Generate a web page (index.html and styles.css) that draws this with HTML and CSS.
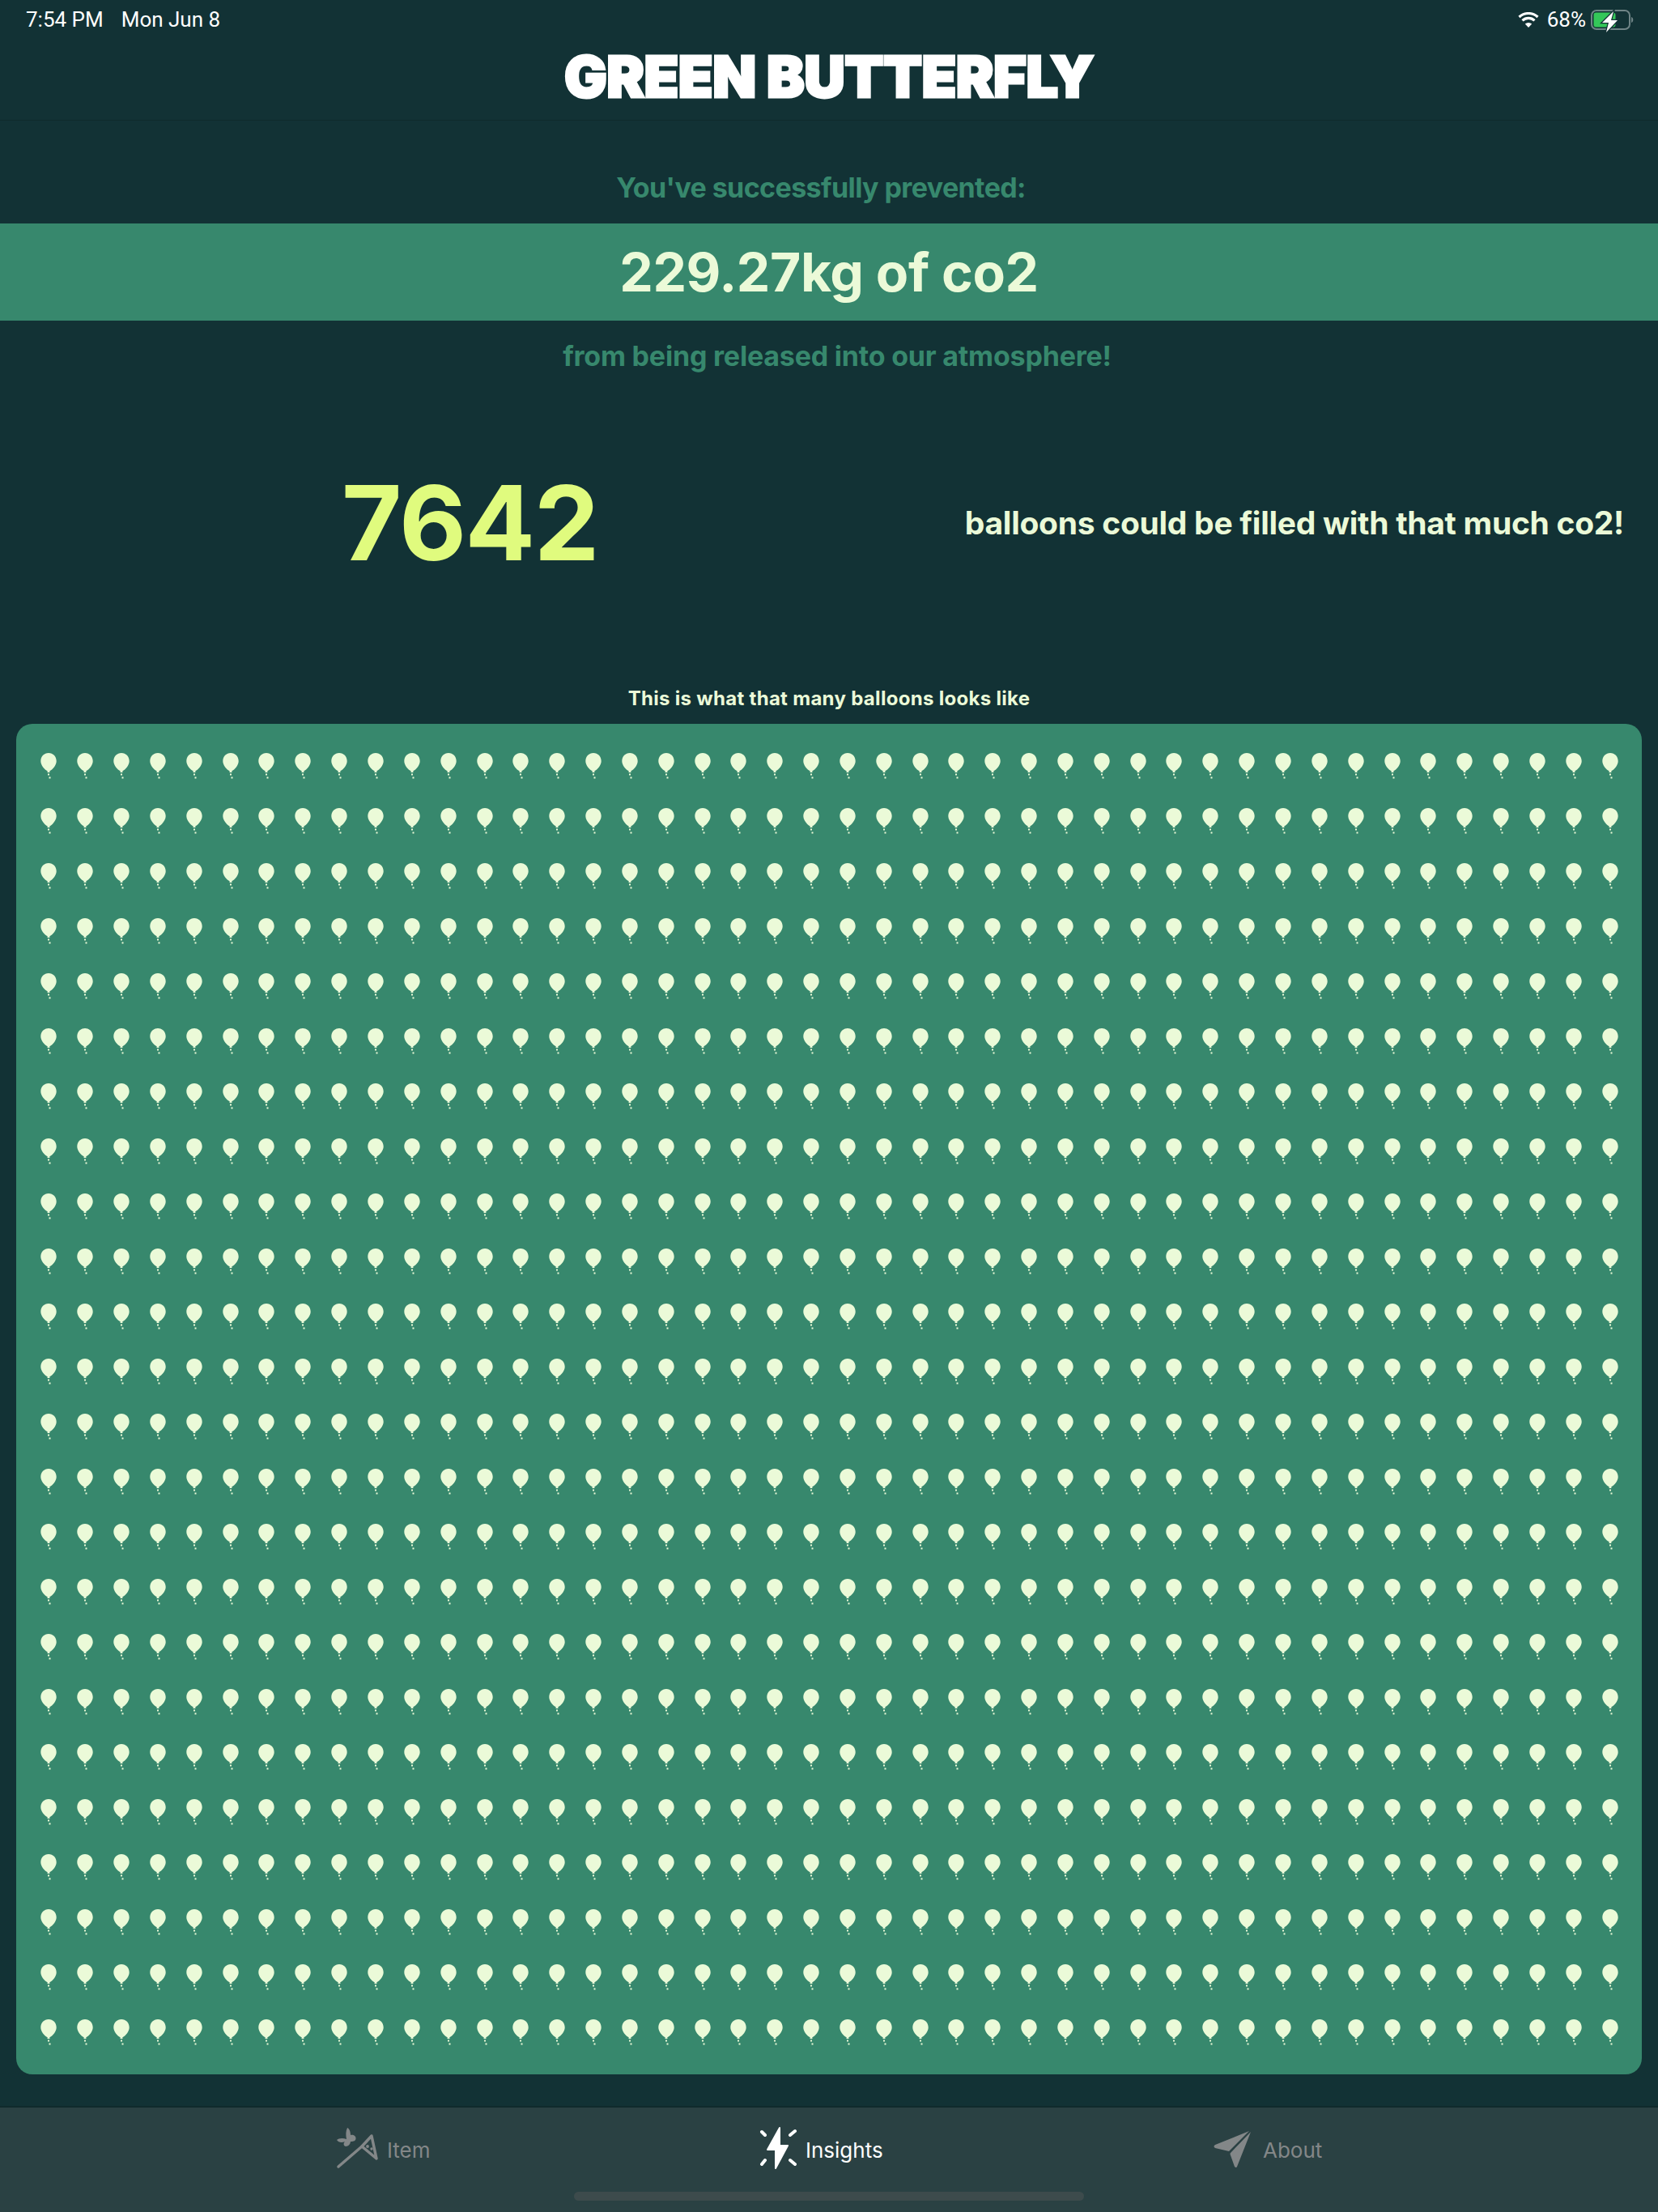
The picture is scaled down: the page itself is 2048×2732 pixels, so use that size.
FILE: index.html
```html
<!DOCTYPE html>
<html lang="en">
<head>
    <meta charset="UTF-8">
    <meta name="viewport" content="width=device-width, initial-scale=1.0">
    <title>Green Butterfly</title>
    <link rel="stylesheet" href="styles.css">
</head>
<body>
    <svg class="defs" width="0" height="0">
        <symbol id="balloon" viewBox="0 0 20 32">
            <path d="M10 0C4.5 0 .3 4.300 .3 10C.3 15 5 20.500 8.800 22.500L8.400 24h3.200L11.200 22.500C15 20.500 19.700 15 19.700 10C19.700 4.300 15.500 0 10 0Z"/>
            <rect x="9" y="25.500" width="2" height="2"/>
            <rect x="10.500" y="29.500" width="2" height="2"/>
        </symbol>
    </svg>

    <div class="status-bar">
        <div class="status-left"><span>7:54 PM</span><span>Mon Jun 8</span></div>
        <div class="status-right">
            <svg class="wifi" viewBox="0 0 26 19" width="26" height="19">
                <path d="M13 19L8.800 14.600A6.300 6.300 0 0 1 17.200 14.600Z" fill="#fff"/>
                <path d="M5.500 10.300A11 11 0 0 1 20.500 10.300M1.500 6A17 17 0 0 1 24.500 6" fill="none" stroke="#fff" stroke-width="3.200"/>
            </svg>
            <span>68%</span>
            <svg class="battery" viewBox="0 0 53 29" width="53" height="29">
                <rect x="1" y="1" width="47" height="23" rx="6" fill="none" stroke="#6f8486" stroke-width="2"/>
                <rect x="3.500" y="3.500" width="27" height="18" rx="3" fill="#34c759"/>
                <path d="M50 9c3 .5 3 6.500 0 7Z" fill="#6f8486"/>
                <path d="M28 2L14 16h8l-3 12 14-15h-8Z" fill="#fff" stroke="#123235" stroke-width="2.500" paint-order="stroke"/>
            </svg>
        </div>
    </div>

    <header class="title-bar">
        <h1>GREEN BUTTERFLY</h1>
    </header>

    <main>
        <p class="prevented first">You've successfully prevented:</p>
        <div class="amount">229.27kg of co2</div>
        <p class="prevented second">from being released into our atmosphere!</p>

        <div class="count-row">
            <div class="count">7642</div>
            <div class="count-text">balloons could be filled with that much co2!</div>
        </div>

        <p class="grid-caption">This is what that many balloons looks like</p>
        <div class="balloon-panel" id="balloonPanel"></div>
    </main>

    <nav class="tab-bar">
        <div class="tabs">
            <div class="tab tab-item">
                <svg viewBox="10 5 54 60" width="54" height="60" fill="#838788">
                    <path d="M24 8C27 9 28 14 28 17C31 16 35 18 34.500 21.500C34 25 30 25 28 25C28 28 25 31 22 31C19 30 19 27 21 25C17 27 13 26 11 23C13 21 18 20 23 22C22 17 22 12 24 8Z"/>
                    <path d="M13 56L42 31" fill="none" stroke="#838788" stroke-width="3.500" stroke-linecap="round"/>
                    <path d="M54 18L42 31L60 46Z" fill="none" stroke="#838788" stroke-width="3.500" stroke-linejoin="round"/>
                    <circle cx="49" cy="31" r="1.900"/>
                    <circle cx="54" cy="34" r="1.700"/>
                </svg>
                <span>Item</span>
            </div>
            <div class="tab tab-active">
                <svg viewBox="8 5 46 60" width="46" height="60" fill="#fff">
                    <path d="M33 8L18 35H28L28 58L43 30H33Z" stroke="#fff" stroke-width="2" stroke-linejoin="round"/>
                    <path d="M11 13L15 17M52 12L46 17M11 53L15 48M52 53L46 48" stroke="#fff" stroke-width="4" stroke-linecap="round"/>
                </svg>
                <span>Insights</span>
            </div>
            <div class="tab tab-about">
                <svg viewBox="0 0 47 46" width="47" height="46" fill="#838788">
                    <path d="M44 0L2 17Q-1 19 2 21L19 25Z"/>
                    <path d="M46 1L21 27Q20 28 21 30L26 44Q28 46 29 44Z"/>
                </svg>
                <span>About</span>
            </div>
        </div>
        <div class="home-indicator"></div>
    </nav>

    <script src="balloons.js"></script>
</body>
</html>
```

FILE: styles.css
```css
* {
    box-sizing: border-box;
}

body {
    margin: 0;
    width: 2048px;
    height: 2732px;
    display: flex;
    flex-direction: column;
    background-color: #123235;
    font-family: Inter, "Noto Sans", sans-serif;
    color: #ebfad8;
    overflow: hidden;
}

p {
    margin: 0;
}

.defs {
    position: absolute;
}

.status-bar {
    height: 48px;
    padding: 0 30px 0 32px;
    display: flex;
    justify-content: space-between;
    align-items: center;
    color: white;
    font-family: Roboto, sans-serif;
    font-size: 26px;
}

.status-left {
    display: flex;
    gap: 22px;
}

.status-right {
    display: flex;
    align-items: center;
    gap: 8px;
}

.wifi {
    margin-right: 2px;
}

.battery {
    margin-top: 4px;
    margin-left: -2px;
}

.title-bar {
    height: 101px;
    border-bottom: 1px solid #0f2a2c;
    text-align: center;
}

h1 {
    margin: 0;
    padding-top: 15px;
    font-family: Inter, sans-serif;
    font-size: 70px;
    line-height: 64px;
    font-weight: 900;
    color: white;
    letter-spacing: -0.5px;
    -webkit-text-stroke: 3px white;
}

main {
    flex: 1;
    display: flex;
    flex-direction: column;
}

.prevented {
    font-size: 34px;
    font-weight: 700;
    color: #37886d;
    line-height: 44px;
    text-align: center;
}

.first {
    margin-top: 61px;
    padding-right: 20px;
    letter-spacing: -0.6px;
}

.second {
    margin-top: 22px;
    padding-left: 20px;
    letter-spacing: -0.2px;
}

.amount {
    margin-top: 22px;
    height: 120px;
    background-color: #37886d;
    font-size: 66px;
    font-weight: 700;
    line-height: 120px;
    letter-spacing: -0.4px;
    text-align: center;
}

.count-row {
    margin-top: 83px;
    height: 200px;
    padding: 0 42px 0 422px;
    display: flex;
    justify-content: space-between;
    align-items: center;
}

.count {
    font-size: 128px;
    font-weight: 700;
    letter-spacing: -1.5px;
    color: #e0fb7e;
}

.count-text {
    font-size: 39px;
    font-weight: 700;
    letter-spacing: -0.28px;
}

.grid-caption {
    margin-top: 103px;
    font-size: 24px;
    font-weight: 700;
    line-height: 30px;
    letter-spacing: 0.3px;
    text-align: center;
}

.balloon-panel {
    margin: 16px 20px 0;
    height: 1668px;
    padding: 36px 17px 0 18px;
    display: grid;
    grid-template-columns: repeat(44, 1fr);
    grid-auto-rows: 68px;
    justify-items: center;
    background-color: #37886d;
    border-radius: 20px;
}

.balloon {
    width: 20px;
    height: 32px;
    fill: #ebfad8;
}

.tab-bar {
    height: 131px;
    border-top: 2px solid #0f2a2c;
    padding-top: 22px;
    background-color: #2a4143;
    font-size: 26px;
    color: #838788;
}

.tabs {
    height: 60px;
    padding-left: 415px;
    display: grid;
    grid-template-columns: 523px 561px auto;
}

.tab {
    display: flex;
    align-items: center;
    gap: 11px;
}

.tab-item {
    gap: 9px;
}

.tab-active {
    color: white;
}

.tab-about {
    gap: 14px;
}

.home-indicator {
    margin: 22px auto 0;
    width: 630px;
    height: 11px;
    border-radius: 6px;
    background-color: #3d4b4c;
}
```

FILE: balloons.js
```js
// 44 columns x 24 rows of balloons
const panel = document.getElementById("balloonPanel");
let html = "";
for (let i = 0; i < 44 * 24; i++) {
    html += '<svg class="balloon"><use href="#balloon"></use></svg>';
}
panel.innerHTML = html;
```
